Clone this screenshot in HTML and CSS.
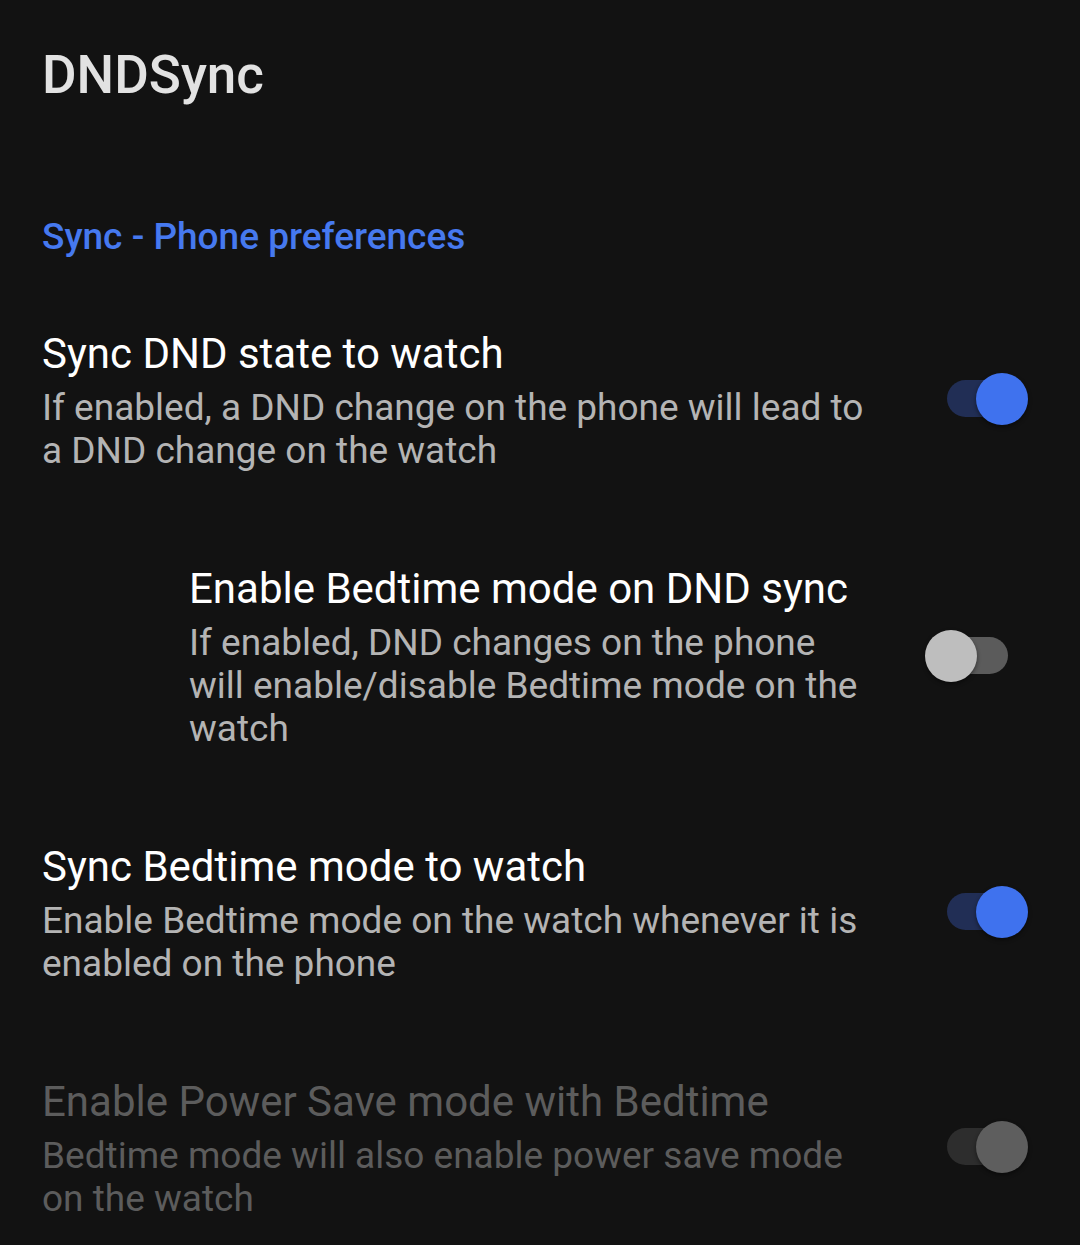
FILE: index.html
```html
<!DOCTYPE html>
<html lang="en">
<head>
<meta charset="utf-8">
<title>DNDSync</title>
<link rel="stylesheet" href="styles.css">
</head>
<body>
<div class="screen">
  <header class="toolbar">
    <h1 class="app-title">DNDSync</h1>
  </header>
  <div class="category">Sync - Phone preferences</div>

  <div class="pref">
    <div class="pref-text">
      <div class="pref-title">Sync DND state to watch</div>
      <div class="pref-summary">If enabled, a DND change on the phone will lead to a DND change on the watch</div>
    </div>
    <div class="switch on"><span class="track"></span><span class="thumb"></span></div>
  </div>

  <div class="pref pref-nested">
    <div class="pref-text">
      <div class="pref-title">Enable Bedtime mode on DND sync</div>
      <div class="pref-summary">If enabled, DND changes on the phone will enable/disable Bedtime mode on the watch</div>
    </div>
    <div class="switch off"><span class="track"></span><span class="thumb"></span></div>
  </div>

  <div class="pref">
    <div class="pref-text">
      <div class="pref-title">Sync Bedtime mode to watch</div>
      <div class="pref-summary">Enable Bedtime mode on the watch whenever it is enabled on the phone</div>
    </div>
    <div class="switch on"><span class="track"></span><span class="thumb"></span></div>
  </div>

  <div class="pref pref-disabled">
    <div class="pref-text">
      <div class="pref-title">Enable Power Save mode with Bedtime</div>
      <div class="pref-summary">Bedtime mode will also enable power save mode on the watch</div>
    </div>
    <div class="switch on disabled"><span class="track"></span><span class="thumb"></span></div>
  </div>
</div>
</body>
</html>
```
FILE: styles.css
```css
html, body {
  margin: 0;
  padding: 0;
  background: #121212;
}
body {
  font-family: Roboto, "Noto Sans", "Liberation Sans", sans-serif;
  width: 1080px;
  height: 1245px;
  overflow: hidden;
}
.screen {
  display: flex;
  flex-direction: column;
}
.toolbar {
  padding: 43px 0 0 42px;
}
.app-title {
  margin: 0;
  font-size: 53px;
  line-height: 64px;
  font-weight: 500;
  color: #e2e2e2;
}
.category {
  margin-top: 108px;
  margin-bottom: 24px;
  padding-left: 42px;
  font-size: 37px;
  line-height: 44px;
  font-weight: 500;
  color: #4679ef;
}
.pref {
  display: flex;
  align-items: center;
  padding: 46px 52px 46px 42px;
}
.pref-nested {
  padding-left: 189px;
}
.pref-text {
  flex: 1;
  padding-right: 55px;
}
.pref-title {
  font-size: 42px;
  line-height: 50px;
  color: #ffffff;
}
.pref-summary {
  margin-top: 7px;
  font-size: 37px;
  line-height: 43px;
  color: #b4b4b4;
}
.pref-disabled .pref-title,
.pref-disabled .pref-summary {
  color: #5c5c5c;
}
.switch {
  position: relative;
  flex: none;
  width: 103px;
  height: 52px;
  margin-top: -3px;
}
.track {
  position: absolute;
  left: 22px;
  top: 7px;
  width: 61px;
  height: 37px;
  border-radius: 19px;
  background: #5b5b5b;
}
.thumb {
  position: absolute;
  top: 0;
  width: 52px;
  height: 52px;
  border-radius: 50%;
  background: #bebebe;
  box-shadow: 0 2px 4px rgba(0, 0, 0, 0.45);
}
.switch.off .thumb {
  left: 0;
}
.switch.on .thumb {
  right: 0;
}
.switch.on .track {
  background: #212e55;
}
.switch.on .thumb {
  background: #3f72ee;
}
.switch.disabled .track {
  background: #2d2d2d;
}
.switch.disabled .thumb {
  background: #5e5e5e;
}
```
